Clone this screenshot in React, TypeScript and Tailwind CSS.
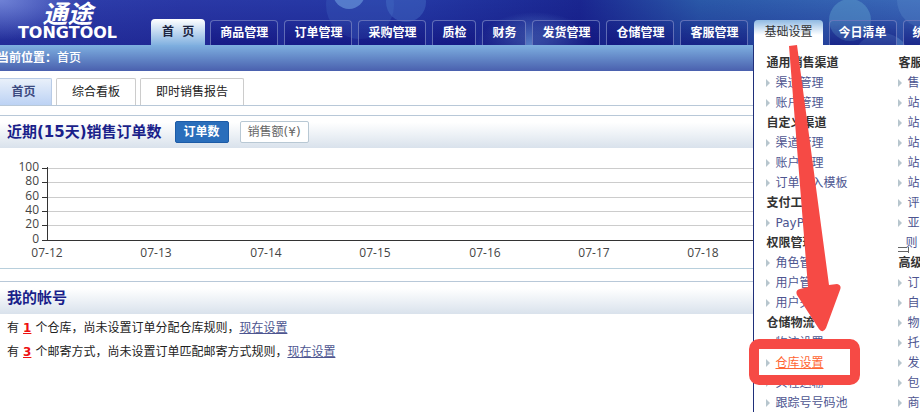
import type { ReactNode } from 'react';

interface MenuGroup {
  title: string;
  items: string[];
}

const navBefore = ['商品管理', '订单管理', '采购管理', '质检', '财务', '发货管理', '仓储管理', '客服管理'];
const navAfter = ['今日清单', '统计分析'];

const settings: MenuGroup[] = [
  { title: '通用销售渠道', items: ['渠道管理', '账户管理'] },
  { title: '自定义渠道', items: ['渠道管理', '账户管理', '订单导入模板'] },
  { title: '支付工具', items: ['PayPal'] },
  { title: '权限管理', items: ['角色管理', '用户管理', '用户关联'] },
  { title: '仓储物流', items: ['物流设置', '仓库设置', '头程运输', '跟踪号号码池'] },
];

const service: MenuGroup[] = [
  { title: '客服', items: ['售', '站', '站', '站', '站', '站', '评', '亚'] },
  { title: '高级', items: ['订', '自', '物', '托', '发', '包', '商'] },
];

const days = ['07-12', '07-13', '07-14', '07-15', '07-16', '07-17', '07-18'];

const yTicks = [
  { label: '100', y: 20 },
  { label: '80', y: 34 },
  { label: '60', y: 49 },
  { label: '40', y: 63 },
  { label: '20', y: 77 },
  { label: '0', y: 92 },
];

function Logo() {
  return (
    <a href="#" className="flex w-[151px] shrink-0 flex-col items-center self-start pt-[3px] pr-4 font-bold text-white">
      <span className="text-[25px] leading-6 italic">通途</span>
      <span className="text-base leading-3">TONGTOOL</span>
    </a>
  );
}

function NavTab({ label }: { label: string }) {
  return (
    <li className="shrink-0">
      <a
        href="#"
        className="block h-[25px] rounded-t border border-b-0 border-[#7f8cc8]/70 bg-linear-to-b from-[#10107a]/10 to-[#10107a]/50 px-[9px] text-xs leading-6 font-bold whitespace-nowrap text-white"
      >
        {label}
      </a>
    </li>
  );
}

function MenuItem({ label }: { label: string }) {
  const current = label === '仓库设置';
  return (
    <li className="flex items-center gap-[5px]">
      <svg width="4" height="8" viewBox="0 0 4 8" className="shrink-0">
        <path d="M0 0L4 4L0 8Z" fill="#b7c6ce" />
      </svg>
      <a href="#" className={current ? 'text-[#ff6633] underline' : 'text-[#4d5590]'}>
        {label}
      </a>
    </li>
  );
}

function MenuColumn({ groups }: { groups: MenuGroup[] }) {
  return (
    <div className="w-[132px] shrink-0 text-xs leading-5">
      {groups.map((group) => (
        <div key={group.title}>
          <h3 className="font-bold text-[#333]">{group.title}</h3>
          <ul>
            {group.items.map((item, i) => (
              <MenuItem key={i} label={item} />
            ))}
          </ul>
          {group.title === '客服' && (
            <p className="relative pl-[7px] text-[#4d5590]">
              则
              <svg width="12" height="7" viewBox="0 0 12 7" className="absolute bottom-0 left-0">
                <path d="M0 1.5H9M0 5.5H11M10.5 1V7" fill="none" stroke="#666" />
              </svg>
            </p>
          )}
        </div>
      ))}
    </div>
  );
}

// Red arrow and frame that point the user to the warehouse settings link
function Hint() {
  return (
    <svg width="120" height="350" viewBox="0 0 120 350" className="pointer-events-none absolute top-0 -left-[5px]">
      <path
        d="M40 1L48 0L80 240L88 239Q93 240 91 245L77 283Q74 289 70 284L48 250Q46 245 51 244L59 242Z"
        fill="#f64a45"
      />
      <rect x="5" y="299" width="101" height="36" rx="5" fill="none" stroke="#f64a45" strokeWidth="10" />
    </svg>
  );
}

function SettingsTab() {
  return (
    <li className="relative z-10 shrink-0">
      <a
        href="#"
        className="block h-[25px] rounded-t bg-linear-to-b from-[#8fb9e2] to-white to-60% px-[10px] text-xs leading-6 whitespace-nowrap text-[#333]"
      >
        基础设置
      </a>
      <div className="absolute top-full -left-px flex border-l border-[#1f2f7a] bg-white py-2 pl-3">
        <MenuColumn groups={settings} />
        <MenuColumn groups={service} />
        <Hint />
      </div>
    </li>
  );
}

function HeaderBackdrop() {
  return (
    <svg className="absolute inset-0 h-full w-full">
      <defs>
        <radialGradient id="glow">
          <stop offset="0" stopColor="#6fa0dc" stopOpacity=".8" />
          <stop offset="1" stopColor="#6fa0dc" stopOpacity="0" />
        </radialGradient>
        <radialGradient id="corner">
          <stop offset="0" stopColor="#7f92e0" stopOpacity=".8" />
          <stop offset="1" stopColor="#7f92e0" stopOpacity="0" />
        </radialGradient>
      </defs>
      <ellipse cx="0" cy="0" rx="90" ry="40" fill="url(#corner)" />
      <ellipse cx="535" cy="48" rx="60" ry="36" fill="url(#glow)" />
      <circle cx="360" cy="5" r="34" fill="#5080d0" opacity=".2" />
      <circle cx="406" cy="2" r="20" fill="#5080d0" opacity=".35" />
      <circle cx="349" cy="-7" r="16" fill="#6f9fe0" opacity=".6" />
      <circle cx="850" cy="20" r="21" fill="#5c9ccc" opacity=".5" />
      <circle cx="882" cy="62" r="29" fill="#6fa8dc" opacity=".35" />
      <circle cx="925" cy="0" r="28" fill="#5c8ccc" opacity=".35" />
    </svg>
  );
}

function Header() {
  return (
    <header className="relative flex h-[45px] items-end bg-[linear-gradient(to_bottom,transparent,#10107a66),linear-gradient(to_right,#2f40ac,#2a38a6_20%,#2438a4_45%,#1a2690_63%,#2a58a8_76%,#3a68b8)]">
      <HeaderBackdrop />
      <div className="relative flex items-end self-stretch">
        <Logo />
        <nav>
          <ul className="flex items-end gap-[6px]">
            <li className="-mr-px shrink-0">
              <a
                href="#"
                className="block h-[26px] rounded-t bg-linear-to-b from-white to-[#82b1e0] px-[11px] text-xs leading-[26px] font-bold whitespace-pre text-[#1b2440]"
              >
                首  页
              </a>
            </li>
            {navBefore.map((label) => (
              <NavTab key={label} label={label} />
            ))}
            <SettingsTab />
            {navAfter.map((label) => (
              <NavTab key={label} label={label} />
            ))}
          </ul>
        </nav>
      </div>
    </header>
  );
}

function SectionHeader({ children }: { children: ReactNode }) {
  return (
    <div className="flex h-[33px] items-center border-t border-[#b8c8d8] bg-linear-to-b from-white from-20% to-[#d9e2ec] pl-[7px]">
      {children}
    </div>
  );
}

function OrdersChart() {
  return (
    <svg className="h-[120px] w-full font-['Open_Sans',sans-serif]">
      {yTicks.map((tick) => (
        <g key={tick.label}>
          <line x1="42" x2="47" y1={tick.y + 0.5} y2={tick.y + 0.5} stroke="#333" />
          <line x1="47" x2="100%" y1={tick.y + 0.5} y2={tick.y + 0.5} stroke={tick.label === '0' ? '#333' : '#ccc'} />
          <text x="39" y={tick.y + 3} textAnchor="end" fontSize="12" fill="#444">
            {tick.label}
          </text>
        </g>
      ))}
      <line x1="47.5" x2="47.5" y1="19" y2="93" stroke="#333" />
      {days.map((day, i) => (
        <text key={day} x={47 + Math.round(i * 109.4)} y="109" textAnchor="middle" fontSize="12" fill="#444">
          {day}
        </text>
      ))}
    </svg>
  );
}

function Notice({ count, text }: { count: number; text: string }) {
  return (
    <li className="flex gap-[3px]">
      <span>有</span>
      <a href="#" className="px-px font-bold text-[#e11] underline">
        {count}
      </a>
      <span>
        {text}
        <a href="#" className="text-[#4d5590] underline">现在设置</a>
      </span>
    </li>
  );
}

export default function App() {
  return (
    <div className="h-screen overflow-hidden bg-white font-['DejaVu_Sans','Noto_Sans_CJK_SC',sans-serif] text-xs text-[#222]">
      <Header />

      <div className="h-[26px] bg-linear-to-b from-[#7fb0e0] to-[#4a60ae] leading-[26px] text-white">
        <div className="-ml-[3px]">
          <span className="font-bold">当前位置：</span>
          <a href="#" className="font-medium">首页</a>
        </div>
      </div>

      <div className="mt-[7px] flex gap-1 border-b border-[#b8c8d8] leading-[26px] whitespace-nowrap">
        <button className="w-[52px] rounded-tr-xs border-t border-r border-[#b8cbe6] bg-linear-to-b from-[#e9f0fa] to-[#bcd2f4] pr-1 font-bold text-[#3c4a80]">
          首页
        </button>
        <button className="rounded-t-xs border border-b-0 border-[#ccc] px-[15px]">综合看板</button>
        <button className="rounded-t-xs border border-b-0 border-[#ccc] px-[15px]">即时销售报告</button>
      </div>

      <section className="mt-[9px] border-b border-[#b8cfdc]">
        <SectionHeader>
          <h2 className="pt-[2px] text-[15px] font-bold text-[#1a1f8a]">近期(15天)销售订单数</h2>
          <button className="ml-[13px] h-[22px] w-[54px] rounded-xs border border-[#1d5ba6] bg-[#2a6ebb] font-bold text-white">
            订单数
          </button>
          <button className="ml-[11px] h-[22px] w-[69px] rounded-xs border border-[#b8c8d4] bg-white text-[#666]">
            销售额(¥)
          </button>
        </SectionHeader>
        <OrdersChart />
      </section>

      <section className="mt-3">
        <SectionHeader>
          <h2 className="pt-[2px] text-[15px] font-bold text-[#1a1f8a]">我的帐号</h2>
        </SectionHeader>
        <ul className="pt-[2px] pl-[7px] leading-6">
          <Notice count={1} text="个仓库，尚未设置订单分配仓库规则，" />
          <Notice count={3} text="个邮寄方式，尚未设置订单匹配邮寄方式规则，" />
        </ul>
      </section>
    </div>
  );
}
